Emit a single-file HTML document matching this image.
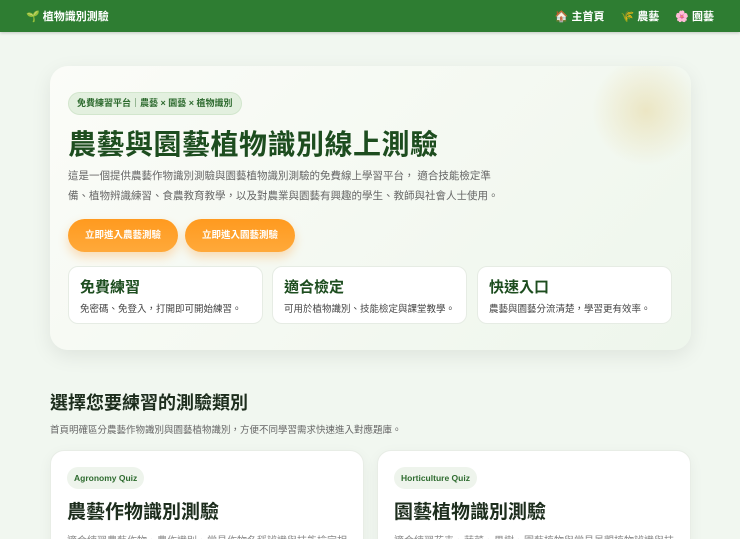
<!DOCTYPE html>
<html><head><meta charset="utf-8"><style>
*{box-sizing:border-box;margin:0;padding:0}
html,body{width:740px;height:539px;overflow:hidden}
body{background:#f1f7f0;font-family:"Liberation Sans","Noto Sans CJK TC",sans-serif;color:#333;position:relative}
.nav{height:32px;background:#2e7d32;display:flex;align-items:center;padding:0 26px;color:#fff;font-weight:700;font-size:11px;box-shadow:0 1px 3px rgba(0,0,0,.2)}
.nav .brand{flex:1}
.nav span.l{margin-left:16px}
.hero{position:absolute;left:50px;top:66px;width:641px;height:284px;border-radius:18px;background:linear-gradient(135deg,#fbfcf8,#eef6ec);box-shadow:0 6px 20px rgba(0,0,0,.08);overflow:hidden}
.glow{position:absolute;right:-10px;top:-10px;width:110px;height:110px;border-radius:50%;background:radial-gradient(circle,rgba(230,215,160,.55),rgba(240,235,200,0) 70%)}
.badge{position:absolute;left:18px;top:26px;height:23px;padding:0 8px;border-radius:12px;background:#e3f0df;border:1px solid #d2e6cd;font-size:9px;font-weight:700;color:#2e6b2f;line-height:21px}
h1{position:absolute;left:18px;top:57px;font-size:28px;font-weight:700;color:#1d4d1f;letter-spacing:.5px}
.desc{position:absolute;left:18px;top:101px;width:438px;font-size:10.5px;line-height:19.5px;color:#666}
.btn{position:absolute;top:153px;height:33px;width:110px;border-radius:17px;background:linear-gradient(180deg,#ff9a1f,#ffa93a);color:#fff;font-size:9.5px;font-weight:700;text-align:center;line-height:33px;box-shadow:0 5px 10px rgba(255,150,30,.3)}
.f{position:absolute;top:200px;width:195px;height:58px;background:#fff;border-radius:10px;border:1px solid #e6ece4;padding:9px 11px}
.f b{display:block;font-size:15px;color:#1d4d1f;margin-bottom:4px}
.f p{font-size:9.5px;color:#444}
h2{position:absolute;left:50px;top:389px;font-size:18px;color:#1d2d1d}
.sub{position:absolute;left:50px;top:422px;font-size:9.5px;color:#666}
.card{position:absolute;top:450px;width:314px;height:120px;background:#fff;border-radius:14px;border:1px solid #e8ede6;box-shadow:0 4px 14px rgba(0,0,0,.05);padding:16px}
.card .t{display:inline-block;height:22px;padding:0 7px;border-radius:11px;background:#eef4ec;font-size:8.5px;font-weight:700;color:#2e6b2f;line-height:22px}
.card h3{font-size:19px;color:#1d2d1d;margin-top:8px}
.card p{font-size:10px;color:#888;margin-top:8px;white-space:nowrap;overflow:hidden}
</style></head><body>
<div class="nav"><div class="brand">🌱 植物識別測驗</div><span class="l">🏠 主首頁</span><span class="l">🌾 農藝</span><span class="l">🌸 園藝</span></div>
<div class="hero"><div class="glow"></div>
<div class="badge">免費練習平台｜農藝 × 園藝 × 植物識別</div>
<h1>農藝與園藝植物識別線上測驗</h1>
<div class="desc">這是一個提供農藝作物識別測驗與園藝植物識別測驗的免費線上學習平台， 適合技能檢定準備、植物辨識練習、食農教育教學，以及對農業與園藝有興趣的學生、教師與社會人士使用。</div>
<div class="btn" style="left:18px">立即進入農藝測驗</div>
<div class="btn" style="left:135px">立即進入園藝測驗</div>
<div class="f" style="left:18px"><b>免費練習</b><p>免密碼、免登入，打開即可開始練習。</p></div>
<div class="f" style="left:222px"><b>適合檢定</b><p>可用於植物識別、技能檢定與課堂教學。</p></div>
<div class="f" style="left:427px"><b>快速入口</b><p>農藝與園藝分流清楚，學習更有效率。</p></div>
</div>
<h2>選擇您要練習的測驗類別</h2>
<div class="sub">首頁明確區分農藝作物識別與園藝植物識別，方便不同學習需求快速進入對應題庫。</div>
<div class="card" style="left:50px"><span class="t">Agronomy Quiz</span><h3>農藝作物識別測驗</h3><p>適合練習農藝作物、農作識別、常見作物名稱辨識與技能檢定相關</p></div>
<div class="card" style="left:377px"><span class="t">Horticulture Quiz</span><h3>園藝植物識別測驗</h3><p>適合練習花卉、蔬菜、果樹、園藝植物與常見景觀植物辨識與技能</p></div>
</body></html>
